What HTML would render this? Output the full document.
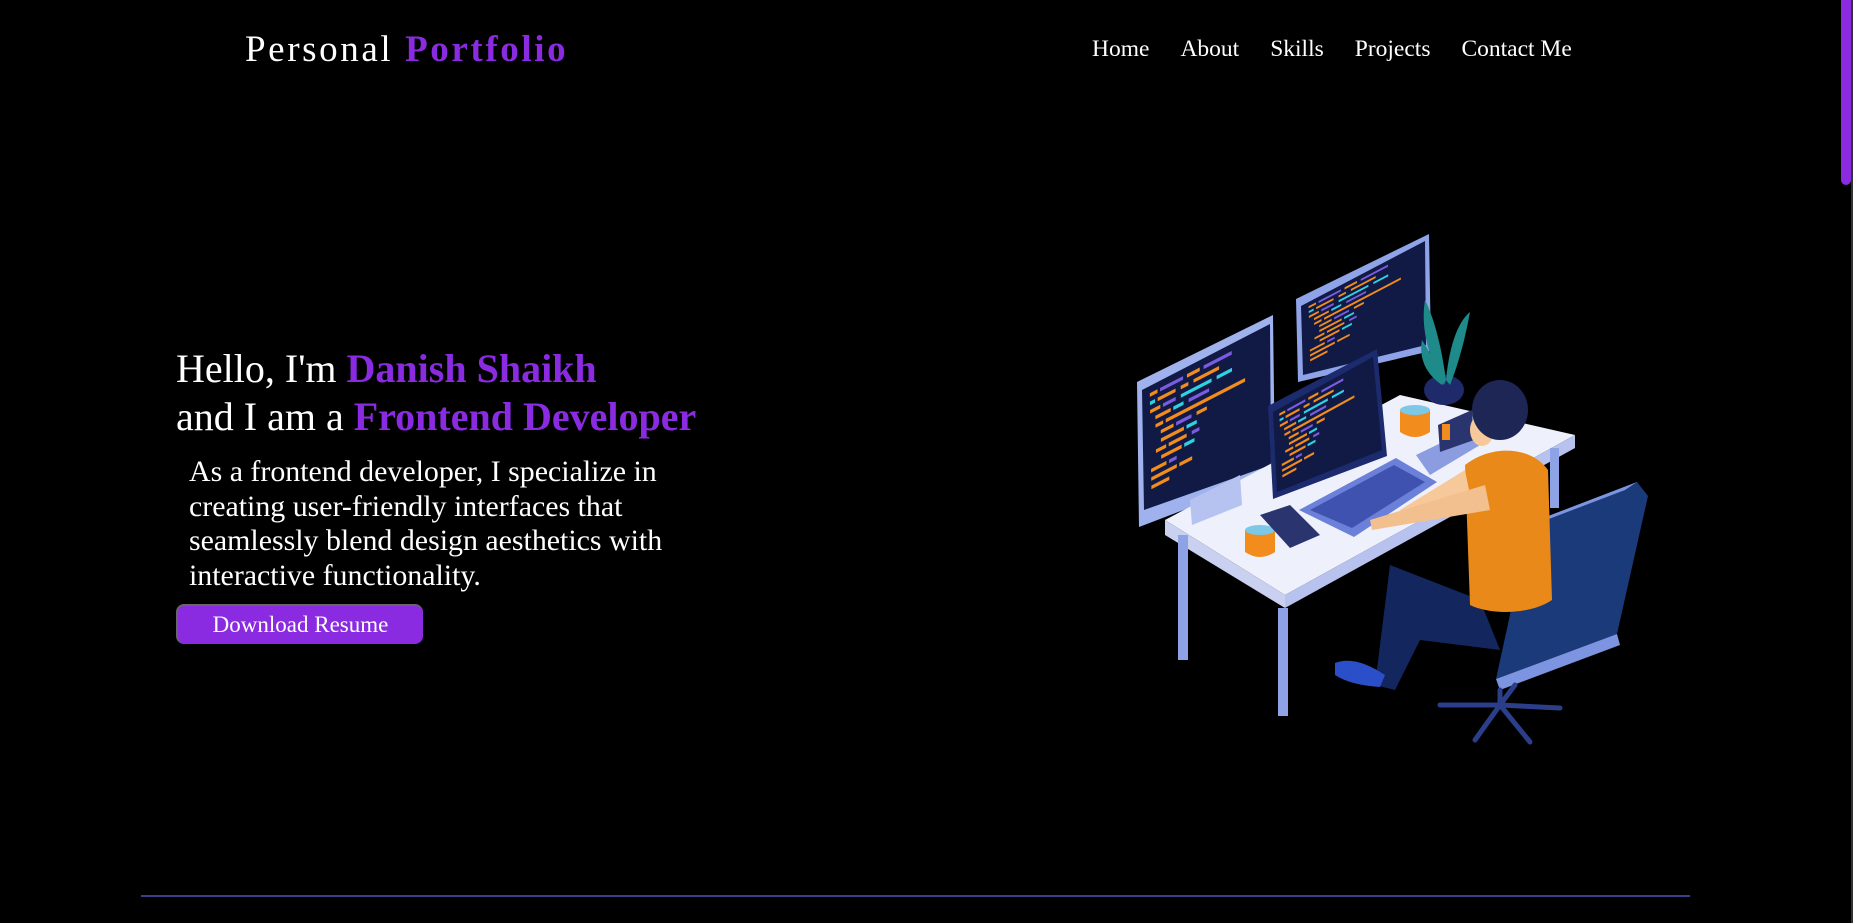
<!DOCTYPE html>
<html><head><meta charset="utf-8"><style>
html,body{margin:0;padding:0;background:#000;width:1853px;height:923px;overflow:hidden;position:relative;font-family:"Liberation Serif",serif;color:#fff}
.logo{position:absolute;left:245px;top:28px;font-size:37px;letter-spacing:2.6px;white-space:nowrap}
.p{color:#8a2be2;font-weight:bold}
nav{position:absolute;left:1092px;top:36px;display:flex;gap:31px;font-size:23.5px;white-space:nowrap}
h1{position:absolute;left:176px;top:345px;margin:0;font-weight:normal;font-size:40px;line-height:48px;white-space:nowrap}
.desc{position:absolute;left:189px;top:455px;width:500px;font-size:29.9px;line-height:34.6px;margin:0}
.btn{position:absolute;left:176px;top:604px;width:247px;height:40px;box-sizing:border-box;background:#8a2be2;border-radius:8px;border-top:2px solid #666;border-left:2px solid #666;font-size:23px;text-align:center;line-height:38px}
.line{position:absolute;left:141px;top:895px;width:1549px;height:2px;background:#3c3c8c}
.thumb{position:absolute;left:1841px;top:0;width:10px;height:185px;background:#8a2be2;border-radius:0 0 5px 5px}
.track{position:absolute;left:1851px;top:0;width:2px;height:923px;background:#333}
</style></head><body>
<div class="logo">Personal <span class="p">Portfolio</span></div>
<nav><span>Home</span><span>About</span><span>Skills</span><span>Projects</span><span>Contact Me</span></nav>
<h1>Hello, I'm <span class="p">Danish Shaikh</span><br>and I am a <span class="p">Frontend Developer</span></h1>
<p class="desc">As a frontend developer, I specialize in creating user-friendly interfaces that seamlessly blend design aesthetics with interactive functionality.</p>
<div class="btn">Download Resume</div>
<div class="line"></div>
<div class="thumb"></div><div class="track"></div>

<svg style="position:absolute;left:1120px;top:220px" width="540" height="550" viewBox="0 0 540 550">
<defs>
<g id="code">
<rect x="6" y="6" width="6" height="3" fill="#f28c1c"/><rect x="14" y="6" width="18" height="3" fill="#7b5ce0"/><rect x="35" y="6" width="10" height="3" fill="#f28c1c"/><rect x="48" y="6" width="22" height="3" fill="#7b5ce0"/>
<rect x="6" y="13" width="4" height="3" fill="#2ed2e0"/><rect x="12" y="13" width="14" height="3" fill="#f28c1c"/><rect x="30" y="13" width="6" height="3" fill="#f28c1c"/><rect x="40" y="13" width="20" height="3" fill="#f28c1c"/>
<rect x="6" y="20" width="8" height="3" fill="#f28c1c"/><rect x="16" y="20" width="10" height="3" fill="#7b5ce0"/><rect x="30" y="20" width="24" height="3" fill="#2ed2e0"/><rect x="58" y="20" width="12" height="3" fill="#2ed2e0"/>
<rect x="10" y="27" width="12" height="3" fill="#f28c1c"/><rect x="24" y="27" width="8" height="3" fill="#2ed2e0"/><rect x="36" y="27" width="16" height="3" fill="#7b5ce0"/>
<rect x="10" y="34" width="6" height="3" fill="#f28c1c"/><rect x="18" y="34" width="62" height="3" fill="#f28c1c"/>
<rect x="14" y="41" width="10" height="3" fill="#f28c1c"/><rect x="26" y="41" width="12" height="3" fill="#7b5ce0"/><rect x="42" y="41" width="8" height="3" fill="#f28c1c"/>
<rect x="14" y="48" width="18" height="3" fill="#f28c1c"/><rect x="34" y="48" width="8" height="3" fill="#2ed2e0"/>
<rect x="10" y="55" width="8" height="3" fill="#f28c1c"/><rect x="20" y="55" width="14" height="3" fill="#f28c1c"/><rect x="38" y="55" width="6" height="3" fill="#7b5ce0"/>
<rect x="14" y="62" width="16" height="3" fill="#f28c1c"/><rect x="32" y="62" width="8" height="3" fill="#2ed2e0"/>
<rect x="6" y="69" width="12" height="3" fill="#f28c1c"/><rect x="20" y="69" width="6" height="3" fill="#7b5ce0"/>
<rect x="6" y="76" width="20" height="3" fill="#f28c1c"/><rect x="28" y="76" width="10" height="3" fill="#f28c1c"/>
<rect x="6" y="83" width="14" height="3" fill="#f28c1c"/>
</g>
</defs>
<polygon points="176,79 309,14 311,131 178,162" fill="#8fa3e8"/>
<polygon points="181,86 305,21 306,125 183,155" fill="#101a45"/>
<g transform="matrix(1.24,-0.65,0.02,0.69,181,86)"><use href="#code"/></g>
<polygon points="17,162 153,95 155,255 19,307" fill="#9fb2ee"/>
<polygon points="22,170 150,104 151,245 24,290" fill="#101a45"/>
<g transform="matrix(1.28,-0.66,0.02,1.2,22,170)"><use href="#code"/></g>
<polygon points="45,300 280,175 455,215 165,375" fill="#eef0fb"/>
<polygon points="45,300 165,375 165,388 45,315" fill="#c9d0f0"/>
<polygon points="165,375 455,215 455,228 165,388" fill="#b8c2ee"/>
<rect x="58" y="315" width="10" height="125" fill="#8ea2e6"/>
<rect x="158" y="388" width="10" height="108" fill="#8ea2e6"/>
<rect x="430" y="228" width="9" height="60" fill="#8ea2e6"/>
<polygon points="70,280 120,255 122,285 72,305" fill="#b6c2ef"/>
<ellipse cx="324" cy="170" rx="20" ry="15" fill="#1e2a6a"/>
<path d="M324 165 C310 140 300 110 305 80 C315 100 322 130 326 160Z M326 160 C330 120 340 100 350 92 C345 120 338 145 330 165Z M322 165 C300 150 300 130 302 120 C312 135 318 150 324 162Z" fill="#1e8a8a"/>
<path d="M280 190 h30 v22 q-15 10 -30 0z" fill="#f28c1c"/><ellipse cx="295" cy="190" rx="15" ry="5" fill="#7cc8e6"/>
<path d="M125 310 h30 v22 q-15 10 -30 0z" fill="#f28c1c"/><ellipse cx="140" cy="310" rx="15" ry="5" fill="#7cc8e6"/>
<polygon points="140,295 170,285 200,315 170,328" fill="#2a3570"/>
<polygon points="148,186 257,129 267,236 153,279" fill="#1c2a6e"/>
<polygon points="153,192 253,137 262,230 157,272" fill="#101a45"/>
<g transform="matrix(1.0,-0.55,0.04,0.8,153,192)"><use href="#code"/></g>
<polygon points="296,235 352,208 365,222 310,255" fill="#8b9de0"/>
<polygon points="318,205 352,190 354,220 320,232" fill="#2a3570"/><rect x="322" y="204" width="8" height="16" fill="#f28c1c"/>
<polygon points="179,290 276,238 317,262 234,317" fill="#6b80d8"/>
<polygon points="190,290 274,245 305,262 232,308" fill="#3f52b0"/>
<polygon points="410,303 517,262 528,276 497,414 376,459" fill="#1a3a7a"/>
<polygon points="410,303 517,262 505,270 400,310" fill="#7d94e0"/>
<polygon points="376,459 497,414 500,425 380,470" fill="#7d94e0"/>
<path d="M270 345 L360 380 L380 430 L300 420 L275 470 L255 465 Z" fill="#14265e"/>
<path d="M215 443 q20 -8 50 12 l-5 12 q-30 -2 -45 -12z" fill="#2a4fc8"/>
<path d="M345 245 C370 225 410 225 428 250 L432 380 C410 395 370 395 350 385 Z" fill="#e8891a"/>
<path d="M345 250 L280 290 L285 300 L350 275 Z" fill="#f6c89a"/>
<path d="M365 265 L250 300 L252 310 L370 290 Z" fill="#f2c08e"/>
<ellipse cx="362" cy="210" rx="12" ry="16" fill="#f6c89a"/>
<ellipse cx="380" cy="190" rx="28" ry="30" fill="#1e2655"/>
<g stroke="#2a3e8a" stroke-width="5" stroke-linecap="round">
<line x1="380" y1="470" x2="380" y2="485"/>
<line x1="380" y1="485" x2="320" y2="485"/><line x1="380" y1="485" x2="440" y2="488"/>
<line x1="380" y1="485" x2="355" y2="520"/><line x1="380" y1="485" x2="410" y2="522"/>
<line x1="380" y1="485" x2="395" y2="465"/>
</g>
</svg>
</body></html>
